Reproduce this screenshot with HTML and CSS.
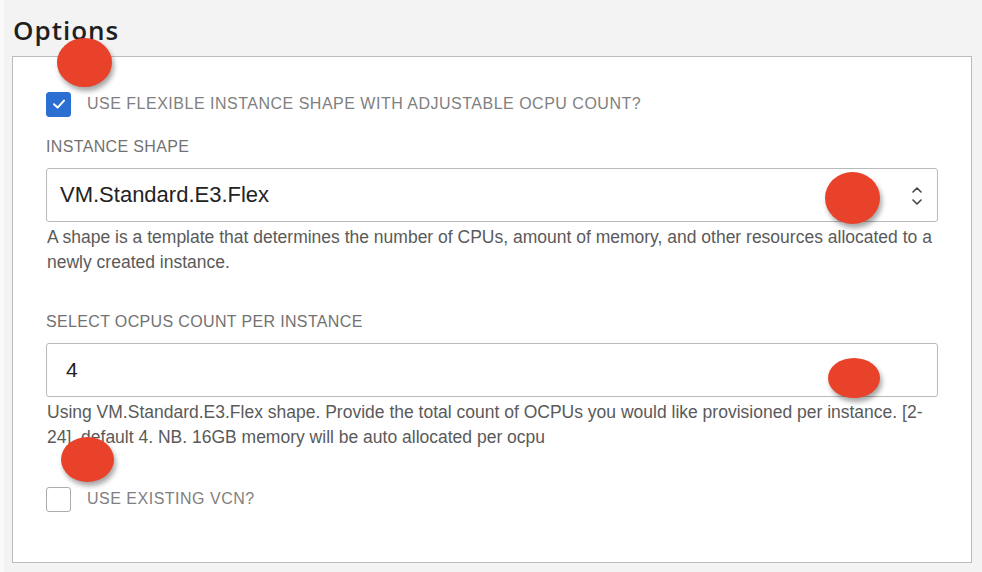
FILE: index.html
```html
<!DOCTYPE html>
<html>
<head>
<meta charset="utf-8">
<link rel="stylesheet" href="styles.css">
</head>
<body>
<div class="page">
  <h2 class="title">Options</h2>
  <div class="panel">
    <div class="check-row first">
      <span class="box checked">
        <svg width="16" height="16" viewBox="0 0 16 16"><path d="M3 8.2 L6.6 11.6 L13 4.6" fill="none" stroke="#fff" stroke-width="2" stroke-linecap="round" stroke-linejoin="round"/></svg>
      </span>
      <span class="check-label">Use flexible instance shape with adjustable OCPU count?</span>
    </div>

    <div class="field shape-field">
      <div class="field-label">Instance Shape</div>
      <div class="control select">
        <span class="value">VM.Standard.E3.Flex</span>
        <svg class="chev" width="12" height="22" viewBox="0 0 12 22"><path d="M2 7 L6 3 L10 7" fill="none" stroke="#444" stroke-width="1.6" stroke-linecap="round" stroke-linejoin="round"/><path d="M2 15 L6 19 L10 15" fill="none" stroke="#444" stroke-width="1.6" stroke-linecap="round" stroke-linejoin="round"/></svg>
      </div>
      <p class="help">A shape is a template that determines the number of CPUs, amount of memory, and other resources allocated to a newly created instance.</p>
    </div>

    <div class="field ocpu-field">
      <div class="field-label">Select OCPUs count per instance</div>
      <div class="control input">
        <span class="value num">4</span>
      </div>
      <p class="help">Using VM.Standard.E3.Flex shape. Provide the total count of OCPUs you would like provisioned per instance. [2-24], default 4. NB. 16GB memory will be auto allocated per ocpu</p>
    </div>

    <div class="check-row last">
      <span class="box"></span>
      <span class="check-label">Use existing VCN?</span>
    </div>
  </div>

  <span class="dot d1"></span>
  <span class="dot d2"></span>
  <span class="dot d3"></span>
  <span class="dot d4"></span>
</div>
</body>
</html>
```

FILE: styles.css
```css
html, body {
  margin: 0;
  padding: 0;
  background: #f3f3f4;
  font-family: "Liberation Sans", Arial, sans-serif;
}
.page {
  position: relative;
  width: 982px;
  height: 572px;
  overflow: hidden;
  border-left: 4px solid #fafafa;
  box-sizing: border-box;
}
.title {
  margin: 0;
  padding: 15px 0 0 9px;
  height: 56px;
  box-sizing: border-box;
  font-family: "Open Sans", sans-serif;
  font-weight: 600;
  font-size: 26px;
  line-height: 30px;
  color: #1f1f1f;
  letter-spacing: 1px;
}
.panel {
  margin-left: 8px;
  width: 960px;
  height: 507px;
  box-sizing: border-box;
  background: #fff;
  border: 1px solid #b9bcc1;
  padding: 34px 33px 0 33px;
}
.check-row {
  display: flex;
  align-items: center;
  height: 26px;
  gap: 16px;
}
.box {
  width: 25px;
  height: 25px;
  box-sizing: border-box;
  border: 1px solid #a9abae;
  border-radius: 3px;
  display: flex;
  align-items: center;
  justify-content: center;
  background: #fff;
  flex: none;
}
.box.checked {
  background: #2c6fd3;
  border-color: #2c6fd3;
}
.check-label {
  font-size: 16px;
  text-transform: uppercase;
  color: #808080;
  letter-spacing: 0.5px;
}
.field-label {
  font-size: 16px;
  text-transform: uppercase;
  color: #727272;
  letter-spacing: 0.35px;
  height: 20px;
  line-height: 20px;
}
.shape-field {
  margin-top: 20px;
}
.shape-field .field-label {
  margin-bottom: 11px;
}
.control {
  height: 54px;
  box-sizing: border-box;
  border: 1px solid #b7b9bd;
  border-radius: 3px;
  display: flex;
  align-items: center;
  justify-content: space-between;
  padding: 0 14px 0 13px;
}
.value {
  font-size: 22px;
  color: #222;
}
.value.num {
  padding-left: 6px;
  font-size: 21px;
}
.chev {
  margin-top: 1px;
}
.help {
  margin: 0;
  padding-top: 3px;
  font-size: 17.5px;
  line-height: 24.5px;
  color: #5a5a5a;
  padding-left: 1px;
}
.ocpu-field {
  margin-top: 38px;
}
.ocpu-field .field-label {
  margin-bottom: 11px;
}
.check-row.last {
  margin-top: 37px;
}
.dot {
  position: absolute;
  border-radius: 50%;
  background: #e8422a;
  box-shadow: 2px 4px 5px rgba(0, 0, 0, 0.35);
}
.d1 { left: 53px; top: 38px; width: 55px; height: 49px; }
.d2 { left: 821px; top: 172px; width: 55px; height: 52px; }
.d3 { left: 824px; top: 358px; width: 52px; height: 40px; }
.d4 { left: 57px; top: 437px; width: 53px; height: 45px; }
```
